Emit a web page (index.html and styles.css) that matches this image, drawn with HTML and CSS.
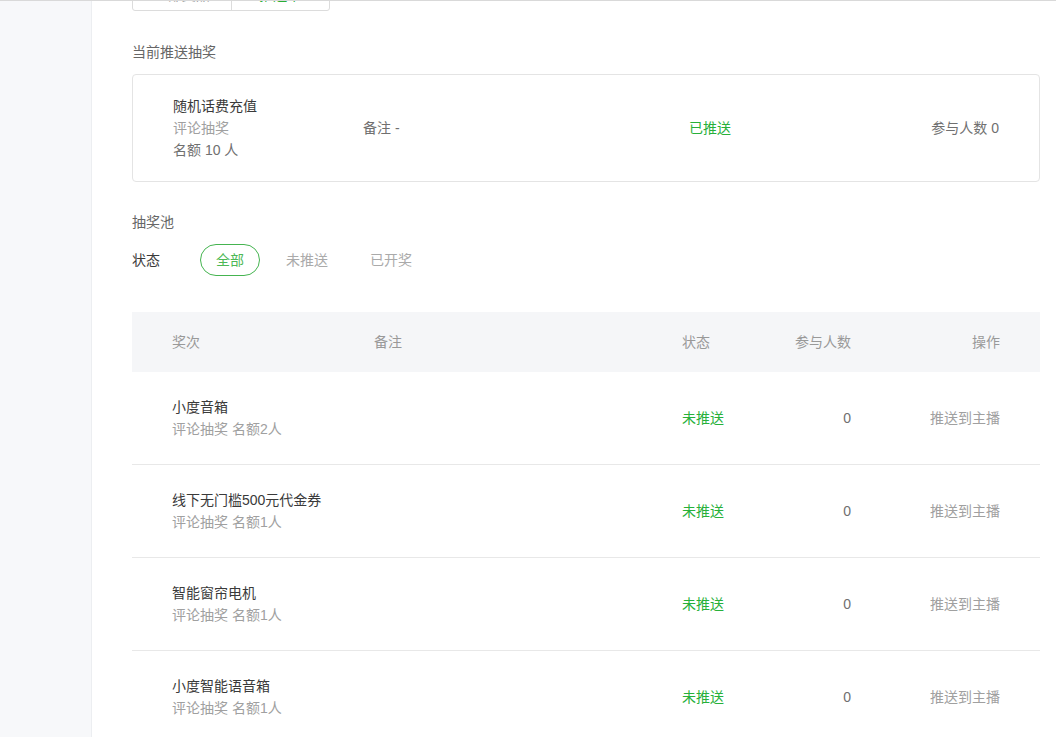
FILE: index.html
```html
<html>
<head>
    <link rel="stylesheet" href="styles.css">
</head>
<body>

<div class="topline"></div>
<div class="layout">
    <div class="sidebar"></div>

    <div class="main">

        <div class="tabs">
            <div class="tab">全部奖品</div>
            <div class="tab active">推送中</div>
        </div>

        <h3 class="section-title">当前推送抽奖</h3>
        <div class="current">
            <div class="cur-name">
                <p class="dark">随机话费充值</p>
                <p class="light">评论抽奖</p>
                <p class="mid">名额 10 人</p>
            </div>
            <div class="cur-note">备注 -</div>
            <div class="green">已推送</div>
            <div class="cur-count">参与人数 0</div>
        </div>

        <h3 class="section-title pool">抽奖池</h3>
        <div class="filter">
            <span class="filter-label">状态</span>
            <span class="pill active">全部</span>
            <span class="pill">未推送</span>
            <span class="pill">已开奖</span>
        </div>

        <div class="table">
            <div class="row head">
                <div>奖次</div>
                <div>备注</div>
                <div>状态</div>
                <div class="num">参与人数</div>
                <div class="num">操作</div>
            </div>
            <div class="row">
                <div><p class="dark">小度音箱</p><p class="light">评论抽奖 名额2人</p></div>
                <div></div>
                <div class="green">未推送</div>
                <div class="num mid">0</div>
                <div class="num light">推送到主播</div>
            </div>
            <div class="row">
                <div><p class="dark">线下无门槛500元代金券</p><p class="light">评论抽奖 名额1人</p></div>
                <div></div>
                <div class="green">未推送</div>
                <div class="num mid">0</div>
                <div class="num light">推送到主播</div>
            </div>
            <div class="row">
                <div><p class="dark">智能窗帘电机</p><p class="light">评论抽奖 名额1人</p></div>
                <div></div>
                <div class="green">未推送</div>
                <div class="num mid">0</div>
                <div class="num light">推送到主播</div>
            </div>
            <div class="row">
                <div><p class="dark">小度智能语音箱</p><p class="light">评论抽奖 名额1人</p></div>
                <div></div>
                <div class="green">未推送</div>
                <div class="num mid">0</div>
                <div class="num light">推送到主播</div>
            </div>
        </div>

    </div>
</div>

</body>
</html>
```

FILE: styles.css
```css
body{
    margin: 0;
    font-family: "Liberation Sans", "Noto Sans CJK SC", sans-serif;
    font-size: 14px;
    line-height: 22px;
    color: #333;
    background-color: #fff;
    overflow: hidden;
    height: 737px;
}
p{
    margin: 0;
}
.topline{
    height: 1px;
    background-color: #d9d9d9;
}
.layout{
    display: flex;
    height: 736px;
}
.sidebar{
    width: 91px;
    flex-shrink: 0;
    background-color: #f7f8fa;
    border-right: 1px solid #eceef1;
}
.main{
    flex: 1;
    padding: 0 16px 0 40px;
    overflow: hidden;
}

/* tabs, scrolled mostly out of view */
.tabs{
    display: flex;
    width: 196px;
    height: 30px;
    margin-top: -22px;
    border: 1px solid #dcdcdc;
    border-radius: 3px;
}
.tab{
    flex: 1;
    text-align: center;
    line-height: 30px;
    color: #999;
}
.tab + .tab{
    border-left: 1px solid #dcdcdc;
}
.tab.active{
    color: #2aae36;
}

.section-title{
    margin: 30px 0 11px;
    font-size: 14px;
    font-weight: normal;
    color: #666;
}
.section-title.pool{
    margin: 29px 0 11px;
}

.dark{
    color: #3a3a3a;
}
.mid{
    color: #707070;
}
.light{
    color: #a0a0a0;
}
.green{
    color: #27b03a;
}

.current{
    display: grid;
    grid-template-columns: 190px 326px 1fr auto;
    align-items: center;
    padding: 20px 40px;
    border: 1px solid #e4e4e4;
    border-radius: 4px;
}
.cur-note{
    color: #707070;
}
.cur-count{
    color: #707070;
}

.filter{
    display: flex;
    align-items: center;
    gap: 10px;
    margin-bottom: 36px;
}
.filter-label{
    color: #3a3a3a;
    margin-right: 30px;
}
.pill{
    padding: 0 15px;
    height: 30px;
    line-height: 30px;
    border: 1px solid transparent;
    border-radius: 16px;
    color: #aaa;
}
.pill.active{
    color: #4db856;
    border-color: #45b450;
}

.row{
    display: grid;
    grid-template-columns: 202px 308px 100px 69px 1fr;
    align-items: center;
    padding: 24px 40px;
    border-bottom: 1px solid #e8e8e8;
}
.row.head{
    height: 60px;
    padding: 0 40px;
    box-sizing: border-box;
    background-color: #f5f6f8;
    border-bottom: none;
    color: #999;
}
.num{
    text-align: right;
}
```
